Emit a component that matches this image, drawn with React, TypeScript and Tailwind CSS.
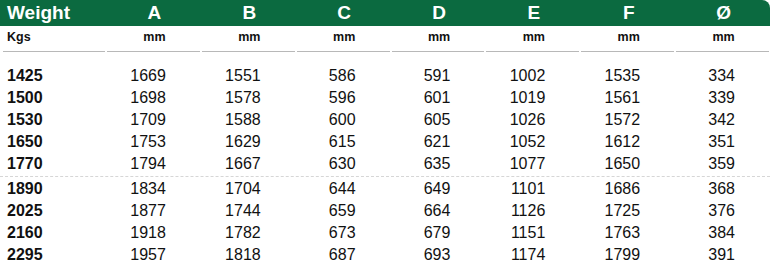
const COLS = ["A", "B", "C", "D", "E", "F", "Ø"];

const ROWS: [string, number[]][] = [
  ["1425", [1669, 1551, 586, 591, 1002, 1535, 334]],
  ["1500", [1698, 1578, 596, 601, 1019, 1561, 339]],
  ["1530", [1709, 1588, 600, 605, 1026, 1572, 342]],
  ["1650", [1753, 1629, 615, 621, 1052, 1612, 351]],
  ["1770", [1794, 1667, 630, 635, 1077, 1650, 359]],
  ["1890", [1834, 1704, 644, 649, 1101, 1686, 368]],
  ["2025", [1877, 1744, 659, 664, 1126, 1725, 376]],
  ["2160", [1918, 1782, 673, 679, 1151, 1763, 384]],
  ["2295", [1957, 1818, 687, 693, 1174, 1799, 391]],
];

const grid = "grid grid-cols-[106px_repeat(7,1fr)]";

function DataRow({ weight, values }: { weight: string; values: number[] }) {
  return (
    <div className={`${grid} h-[22px] items-center text-[16px] leading-[22px] text-[#111]`}>
      <div className="pl-[7px] font-bold">{weight}</div>
      {values.map((v, i) => (
        <div key={i} className="pr-[35px] text-right">
          {v}
        </div>
      ))}
    </div>
  );
}

export default function App() {
  return (
    <div
      className="w-[770px] h-[266px] bg-white overflow-hidden"
      style={{ fontFamily: '"Liberation Sans", Arial, sans-serif' }}
    >
      <div className={`${grid} h-[26px] items-center bg-[#0b6a40] rounded-tr-[8px] text-white font-bold text-[19px] leading-[26px]`}>
        <div className="pl-[7px]">Weight</div>
        {COLS.map((c) => (
          <div key={c} className="text-center pl-[2px]">
            {c}
          </div>
        ))}
      </div>

      <div className={`${grid} h-[22px] items-center font-bold text-[12.5px] text-[#111]`}>
        <div className="pl-[7px]">Kgs</div>
        {COLS.map((c) => (
          <div key={c} className="text-center pl-[2px]">
            mm
          </div>
        ))}
      </div>

      <div className={`${grid} mt-[3px]`}>
        <div className="ml-[3px] mr-[1px] h-px bg-[#b8b8b8]" />
        {COLS.map((c) => (
          <div key={c} className="mx-[1px] h-px bg-[#b8b8b8]" />
        ))}
      </div>

      <div className="mt-[13px]">
        {ROWS.slice(0, 5).map(([w, v]) => (
          <DataRow key={w} weight={w} values={v} />
        ))}
        <div className="h-[3px] pt-px">
          <div className="border-t border-dashed border-[#d6d6d6]" />
        </div>
        {ROWS.slice(5).map(([w, v]) => (
          <DataRow key={w} weight={w} values={v} />
        ))}
      </div>
    </div>
  );
}
